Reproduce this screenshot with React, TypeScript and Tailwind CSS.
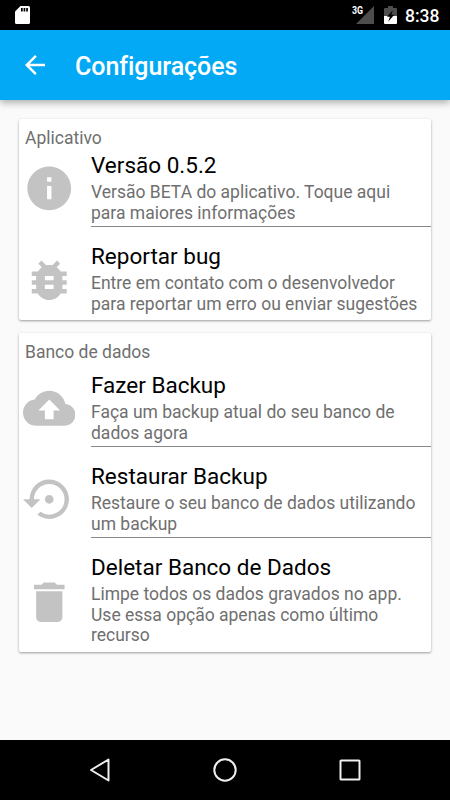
import React from "react";
import type { IconType } from "react-icons";
import {
  MdArrowBack,
  MdBackup,
  MdBugReport,
  MdDelete,
  MdInfo,
  MdSettingsBackupRestore,
} from "react-icons/md";

interface SettingItem {
  title: string;
  lines: string[];
  icon: IconType;
}

interface SettingSection {
  name: string;
  headingGap: string;
  items: SettingItem[];
}

const sections: SettingSection[] = [
  {
    name: "Aplicativo",
    headingGap: "mb-[1.5px]",
    items: [
      {
        title: "Versão 0.5.2",
        lines: ["Versão BETA do aplicativo. Toque aqui", "para maiores informações"],
        icon: MdInfo,
      },
      {
        title: "Reportar bug",
        lines: ["Entre em contato com o desenvolvedor", "para reportar um erro ou enviar sugestões"],
        icon: MdBugReport,
      },
    ],
  },
  {
    name: "Banco de dados",
    headingGap: "mb-[7.5px]",
    items: [
      {
        title: "Fazer Backup",
        lines: ["Faça um backup atual do seu banco de", "dados agora"],
        icon: MdBackup,
      },
      {
        title: "Restaurar Backup",
        lines: ["Restaure o seu banco de dados utilizando", "um backup"],
        icon: MdSettingsBackupRestore,
      },
      {
        title: "Deletar Banco de Dados",
        lines: ["Limpe todos os dados gravados no app.", "Use essa opção apenas como último", "recurso"],
        icon: MdDelete,
      },
    ],
  },
];

function StatusBar() {
  return (
    <div className="flex h-[30px] items-center bg-black pl-[15px] pr-[10px] text-white">
      {/* SD card */}
      <svg className="h-[18px] w-[15px]" viewBox="0 0 15 18">
        <path d="M5.5 0H13.5Q15 0 15 1.5V16.5Q15 18 13.5 18H1.5Q0 18 0 16.5V5.5Z" fill="#fff" />
        <path d="M6 2h1.7v3.6H6zM8.6 2h1.7v3.6H8.6zM11.2 2h1.7v3.6h-1.7z" fill="#000" />
      </svg>
      <div className="ml-auto flex items-center">
        <span className="-mr-[6px] -mt-[9px] w-[11px] origin-left translate-x-[1px] scale-x-[0.84] text-[10.5px] leading-[10px] font-bold">
          3G
        </span>
        <svg className="h-[18px] w-[18px]" viewBox="0 0 18 18">
          <path d="M18 0V18H0Z" fill="#4d4d4d" />
        </svg>
        <svg className="ml-[10px] h-[18px] w-[13px]" viewBox="0 0 13 18">
          <path d="M4 0h5v2h3q1 0 1 1v7H0V3q0-1 1-1h3z" fill="#4d4d4d" />
          <path d="M0 10h13v7q0 1-1 1H1q-1 0-1-1z" fill="#fff" />
          <path d="M8.8 4.2L3 10.8h2.9L4.2 15.8 10.2 8.8H7.3z" fill="#000" />
        </svg>
        <span className="ml-[8px] mt-px w-[35px] whitespace-nowrap text-[17.5px] leading-[30px] font-medium">8:38</span>
      </div>
    </div>
  );
}

function Toolbar() {
  return (
    <header className="relative z-10 flex h-[70px] items-center bg-[#03a9f4] pl-5 text-white shadow-[0_3px_7px_rgba(0,0,0,0.3)]">
      <MdArrowBack className="h-[30px] w-[30px]" />
      <h1 className="ml-[25px] mt-[3px] text-[25px] leading-[30px] font-medium tracking-[-0.05px]">Configurações</h1>
    </header>
  );
}

function SettingRow({ item, last }: { item: SettingItem; last: boolean }) {
  const Icon = item.icon;
  return (
    <div className={`flex items-stretch ${last ? "" : "mb-[14px]"}`}>
      <div className="flex w-[72px] shrink-0 items-center pl-[3.5px]">
        <Icon className="h-[52.5px] w-[52.5px] text-[#c3c3c3]" />
      </div>
      <div className={`min-w-0 flex-1 pt-[2px] ${last ? "pb-[6px]" : "border-b border-[#888888] pb-[3px]"}`}>
        <h3 className="mb-[4px] text-[22.5px] leading-[26px] text-black">{item.title}</h3>
        {item.lines.map((line) => (
          <p key={line} className="whitespace-nowrap text-[17.5px] leading-[20.5px] text-[#6f6f6f]">
            {line}
          </p>
        ))}
      </div>
    </div>
  );
}

function NavigationBar() {
  return (
    <nav className="flex h-[60px] items-center justify-center gap-[95px] bg-black">
      <svg className="h-[30px] w-[30px]" viewBox="0 0 30 30" fill="none" stroke="#eee" strokeWidth="2" strokeLinejoin="round">
        <path d="M19 4.5V25.5L1.5 15Z" transform="translate(4.5 0)" />
      </svg>
      <svg className="h-[30px] w-[30px]" viewBox="0 0 30 30" fill="none" stroke="#eee" strokeWidth="2">
        <circle cx="15" cy="15" r="10.7" />
      </svg>
      <svg className="h-[30px] w-[30px]" viewBox="0 0 30 30" fill="none" stroke="#eee" strokeWidth="2">
        <rect x="5.5" y="5.5" width="19" height="19" rx="0.6" />
      </svg>
    </nav>
  );
}

export default function App() {
  return (
    <div className="flex h-[800px] w-[450px] flex-col overflow-hidden bg-[#fafafa] font-[Roboto,sans-serif]">
      <StatusBar />
      <Toolbar />

      <main className="flex flex-1 flex-col gap-[13px] px-[19px] pt-[19px]">
        {sections.map((section) => (
          <section
            key={section.name}
            className="rounded-[2px] bg-white pt-[9px] shadow-[0_1px_2.5px_rgba(0,0,0,0.38)]"
          >
            <h2 className={`pl-[6px] text-[17.5px] leading-[20.5px] text-[#6f6f6f] ${section.headingGap}`}>
              {section.name}
            </h2>
            {section.items.map((item, i) => (
              <SettingRow key={item.title} item={item} last={i === section.items.length - 1} />
            ))}
          </section>
        ))}
      </main>

      <NavigationBar />
    </div>
  );
}
